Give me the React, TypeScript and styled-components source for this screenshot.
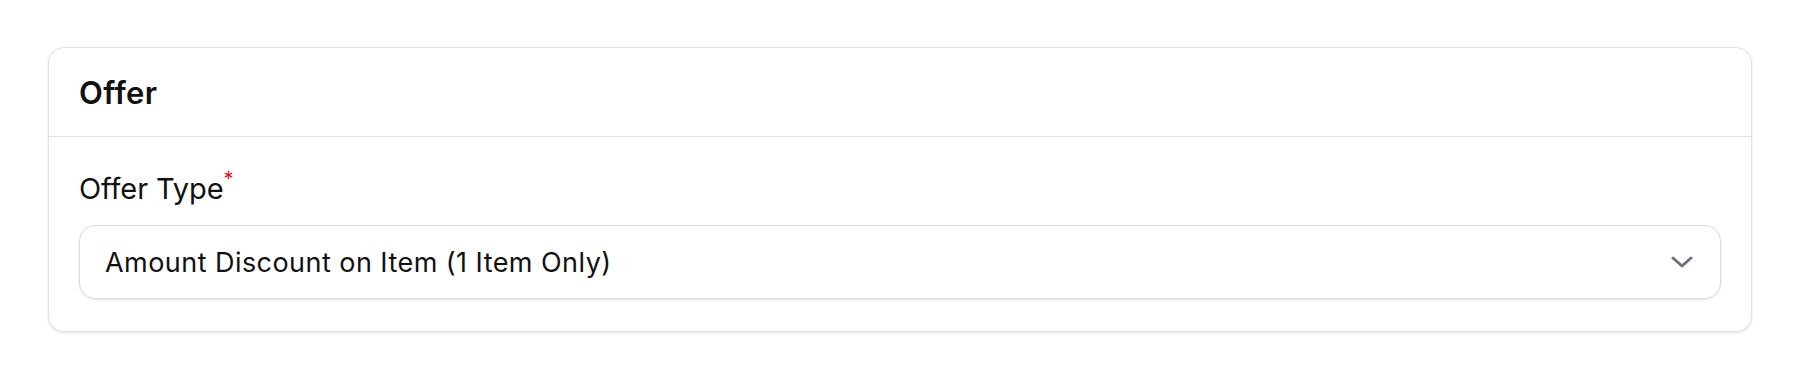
import React from "react";
import styled, { createGlobalStyle } from "styled-components";

const Global = createGlobalStyle`
  html, body { margin: 0; padding: 0; background: #ffffff; }
  body { font-family: Inter, "Noto Sans", sans-serif; color: #111111; -webkit-font-smoothing: antialiased; }
`;

const Page = styled.div`
  padding: 47px 48px;
`;

const Card = styled.section`
  border: 1px solid #e2e2e2;
  border-radius: 16px;
  background: #fff;
  box-shadow: 0 1px 3px rgba(0, 0, 0, 0.1);
`;

const Header = styled.header`
  height: 88px;
  display: flex;
  align-items: center;
  padding: 0 30px;
  border-bottom: 1px solid #e2e2e2;
`;

const Title = styled.h2`
  margin: 0;
  font-size: 31px;
  font-weight: 600;
  letter-spacing: 0.4px;
`;

const Body = styled.div`
  padding: 34px 30px 32px;
  display: flex;
  flex-direction: column;
  gap: 18px;
`;

const Label = styled.label`
  font-size: 29px;
  line-height: 36px;
  font-weight: 400;
  color: #111;
  letter-spacing: -0.1px;
`;

const Required = styled.sup`
  color: #e5121a;
  font-size: 20px;
  line-height: 0;
  position: relative;
  top: -2px;
`;

const Select = styled.div`
  height: 72px;
  border: 1px solid #dcdcdc;
  border-radius: 16px;
  box-shadow: 0 1px 2px rgba(0, 0, 0, 0.12);
  display: flex;
  align-items: center;
  justify-content: space-between;
  padding: 0 27px 0 25px;
`;

const Value = styled.span`
  font-size: 27px;
  letter-spacing: 0.45px;
  color: #111;
`;

const Chevron = styled.svg`
  width: 22px;
  height: 12px;
  color: #6b7280;
`;

export default function App() {
  return (
    <>
      <Global />
      <Page>
        <Card>
          <Header>
            <Title>Offer</Title>
          </Header>
          <Body>
            <Label>
              Offer Type<Required>*</Required>
            </Label>
            <Select>
              <Value>Amount Discount on Item (1 Item Only)</Value>
              <Chevron viewBox="0 0 22 12" fill="none">
                <path d="M2 2 L11 10 L20 2" stroke="currentColor" strokeWidth="3" strokeLinecap="round" strokeLinejoin="round" />
              </Chevron>
            </Select>
          </Body>
        </Card>
      </Page>
    </>
  );
}
